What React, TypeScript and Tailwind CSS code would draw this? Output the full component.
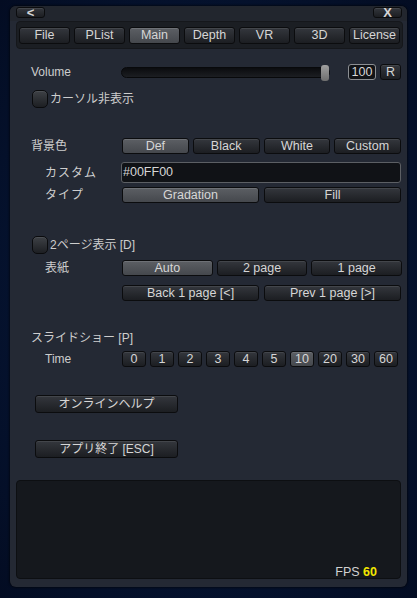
import type { ReactNode } from "react";

const FONT = { fontFamily: '"Liberation Sans", "Noto Sans CJK JP", sans-serif' };

function Btn({ children, active, className = "" }: { children: ReactNode; active?: boolean; className?: string }) {
  return (
    <div
      className={
        "flex items-center justify-center rounded-[3px] border border-[#0b0c0e] text-[12.5px] leading-none text-[#d6d6d6] " +
        (active
          ? "bg-gradient-to-b from-[#5c5f64] to-[#45484d] shadow-[inset_0_1px_0_#6e7176] "
          : "bg-gradient-to-b from-[#34373d] to-[#1c1e22] shadow-[inset_0_1px_0_#43464b] ") +
        className
      }
    >
      {children}
    </div>
  );
}

function Check({ label }: { label: string }) {
  return (
    <div className="flex h-[18px] items-center pl-[22px]">
      <div className="h-[18px] w-[16px] rounded-[5px] border border-[#0a0b0d] bg-gradient-to-b from-[#3e4146] to-[#1d1f23] shadow-[inset_0_1px_0_#4c4f54]" />
      <span className="ml-[2px] text-[12px] text-[#cdcdcd]">{label}</span>
    </div>
  );
}

const tabs = ["File", "PList", "Main", "Depth", "VR", "3D", "License"];
const times = ["0", "1", "2", "3", "4", "5", "10", "20", "30", "60"];

export default function App() {
  return (
    <div className="h-[598px] w-[417px] bg-[radial-gradient(ellipse_at_center,#0b1d3d_0%,#051330_60%,#030c22_100%)] px-[10px] pt-[6px]" style={FONT}>
      <div className="flex h-[581px] w-[397px] flex-col rounded-[6px] bg-[#242934] shadow-[0_0_3px_#000]">
        {/* header */}
        <div className="flex h-[15px] items-start justify-between rounded-t-[6px] bg-[#22262e] pl-[6px] pr-[5px] pt-[1px]">
          <Btn className="h-[11px] w-[29px] text-[13px] font-bold">&lt;</Btn>
          <Btn className="h-[11px] w-[29px] text-[13px] font-bold">X</Btn>
        </div>

        {/* tabs */}
        <div className="ml-[6px] mr-[4px] flex h-[28px] items-center gap-[4px] rounded-[4px] border border-[#15171b] bg-[#1b1e23] px-[2px]">
          {tabs.map((t) => (
            <Btn key={t} active={t === "Main"} className="h-[17px] flex-1">
              {t}
            </Btn>
          ))}
        </div>

        {/* volume */}
        <div className="mt-[15px] flex h-[16px] items-center pl-[21px]">
          <span className="w-[90px] text-[12px] text-[#cdcdcd]">Volume</span>
          <div className="relative h-[11px] w-[209px] rounded-full border border-[#08090b] bg-gradient-to-b from-[#0b0c0f] to-[#1c1e22]">
            <div className="absolute right-[0px] top-[-3px] h-[16px] w-[8px] rounded-[3px] bg-gradient-to-b from-[#a0a0a0] to-[#6e6e6e]" />
          </div>
          <div className="ml-[18px] flex h-[16px] w-[28px] items-center justify-center rounded-[3px] border border-[#8c8f93] bg-[#111317] text-[12.5px] leading-none text-[#d6d6d6]">
            100
          </div>
          <Btn className="ml-[4px] h-[16px] w-[21px]">R</Btn>
        </div>

        <div className="mt-[10px]">
          <Check label="カーソル非表示" />
        </div>

        {/* background color */}
        <div className="mt-[30px] flex h-[16px] items-center pl-[21px]">
          <span className="w-[91px] text-[12px] text-[#cdcdcd]">背景色</span>
          <div className="grid w-[279px] grid-cols-4 gap-[4px]">
            <Btn active className="h-[16px]">Def</Btn>
            <Btn className="h-[16px]">Black</Btn>
            <Btn className="h-[16px]">White</Btn>
            <Btn className="h-[16px]">Custom</Btn>
          </div>
        </div>

        <div className="mt-[8px] flex h-[21px] items-center pl-[35px]">
          <span className="w-[76px] text-[12px] tracking-[1px] text-[#cdcdcd]">カスタム</span>
          <div className="flex h-[21px] w-[280px] items-center rounded-[3px] border border-[#5c5f64] bg-[#101216] px-[1px] text-[12.5px] text-[#d6d6d6]">
            #00FF00
          </div>
        </div>

        <div className="mt-[4px] flex h-[16px] items-center pl-[35px]">
          <span className="w-[77px] text-[12px] tracking-[1px] text-[#cdcdcd]">タイプ</span>
          <div className="grid w-[279px] grid-cols-2 gap-[5px]">
            <Btn active className="h-[16px]">Gradation</Btn>
            <Btn className="h-[16px]">Fill</Btn>
          </div>
        </div>

        {/* two page */}
        <div className="mt-[33px]">
          <Check label="2ページ表示 [D]" />
        </div>

        <div className="mt-[6px] flex h-[16px] items-center pl-[35px]">
          <span className="w-[77px] text-[12px] text-[#cdcdcd]">表紙</span>
          <div className="grid w-[280px] grid-cols-3 gap-[4px]">
            <Btn active className="h-[16px]">Auto</Btn>
            <Btn className="h-[16px]">2 page</Btn>
            <Btn className="h-[16px]">1 page</Btn>
          </div>
        </div>

        <div className="mt-[9px] flex h-[16px] items-center pl-[112px]">
          <div className="grid w-[279px] grid-cols-2 gap-[5px]">
            <Btn className="h-[16px]">Back 1 page [&lt;]</Btn>
            <Btn className="h-[16px]">Prev 1 page [&gt;]</Btn>
          </div>
        </div>

        {/* slideshow */}
        <div className="mt-[30px] flex h-[14px] items-center pl-[21px] text-[12px] text-[#cdcdcd]">スライドショー [P]</div>

        <div className="mt-[6px] flex h-[16px] items-center pl-[35px]">
          <span className="w-[77px] text-[12px] text-[#cdcdcd]">Time</span>
          <div className="grid w-[276px] grid-cols-10 gap-[4px]">
            {times.map((t) => (
              <Btn key={t} active={t === "10"} className="h-[16px]">
                {t}
              </Btn>
            ))}
          </div>
        </div>

        <div className="mt-[28px] pl-[25px]">
          <Btn className="h-[18px] w-[143px] text-[12px]">オンラインヘルプ</Btn>
        </div>
        <div className="mt-[27px] pl-[25px]">
          <Btn className="h-[18px] w-[143px] text-[12px]">アプリ終了 [ESC]</Btn>
        </div>

        {/* log box */}
        <div className="ml-[6px] mt-[22px] flex h-[99px] w-[385px] items-end justify-end rounded-[4px] border border-[#0d0f12] bg-[#15181d] pr-[23px]">
          <div className="text-[12.5px] leading-[12px] text-[#d2d2d2]">
            FPS <span className="font-bold text-[#f2e600]">60</span>
          </div>
        </div>
      </div>
    </div>
  );
}
